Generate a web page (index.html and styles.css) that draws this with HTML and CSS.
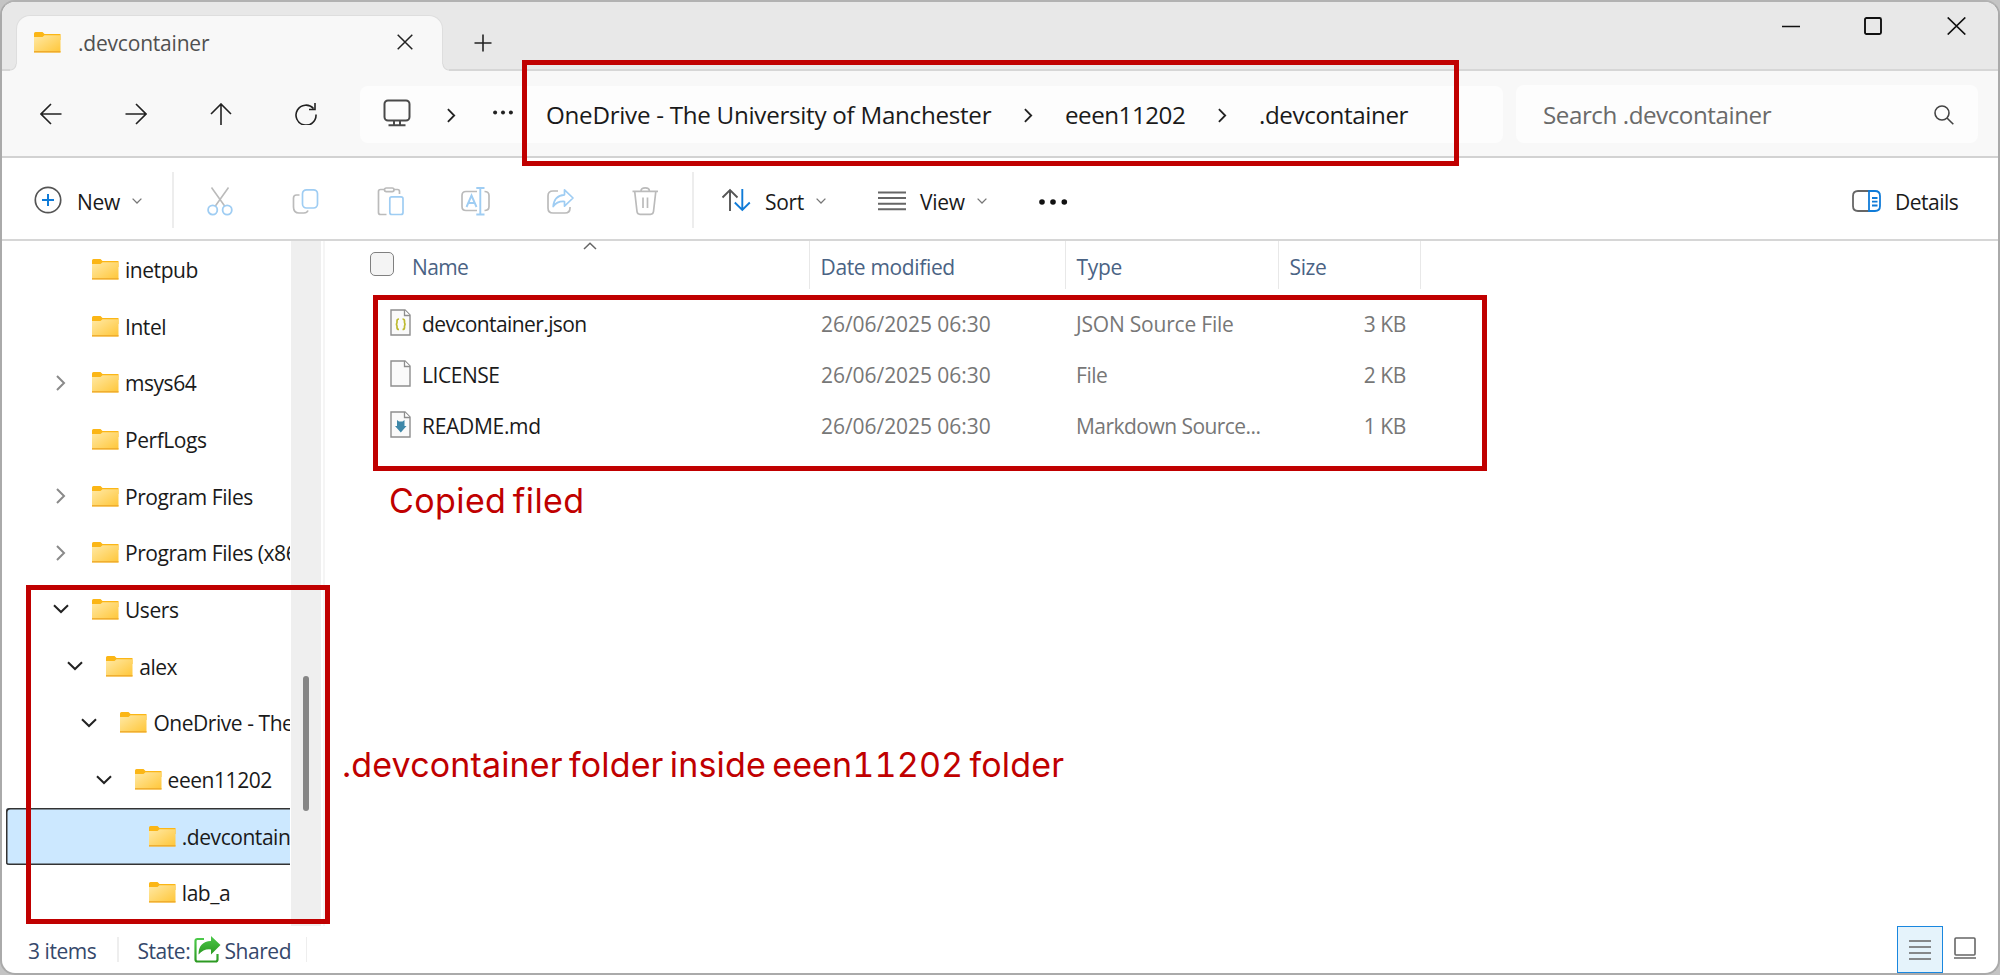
FILE: index.html
```html
<!DOCTYPE html>
<html lang="en">
<head>
<meta charset="utf-8">
<title>.devcontainer</title>
<link rel="stylesheet" href="styles.css">
</head>
<body>
<svg class="defs" width="0" height="0" aria-hidden="true">
  <defs>
    <linearGradient id="fold" x1="0" y1="0" x2="1" y2="1"><stop offset="0" stop-color="#ffe9a6"/><stop offset="1" stop-color="#ffc637"/></linearGradient>
    <linearGradient id="green" x1="0" y1="0" x2="0" y2="1"><stop offset="0" stop-color="#4cc94a"/><stop offset="1" stop-color="#2c9a22"/></linearGradient>
    <symbol id="folder" viewBox="0 0 27 21">
      <path d="M0 1.5Q0 0 1.5 0H8.5L10.5 2H26.5V8H0Z" fill="#fbb616"/>
      <path d="M0 5H8.5L10.5 3.2H26.5V20.5H0Z" fill="url(#fold)"/>
      <path d="M0 19.8H26.5" stroke="#efab2c" stroke-width="1.4"/>
    </symbol>
    <symbol id="right" viewBox="0 0 10 16"><path d="M1 1L8 8L1 15" fill="none" stroke="currentColor" stroke-width="2"/></symbol>
    <symbol id="down" viewBox="0 0 16 10"><path d="M1 1.2L8 8L15 1.2" fill="none" stroke="currentColor" stroke-width="2"/></symbol>
    <symbol id="page" viewBox="0 0 21 27"><path d="M1 1H15L20 6V26H1Z" fill="#fafafa" stroke="#8e8e8e" stroke-width="1.4"/><path d="M14.5 1V6.5H20" fill="#fff" stroke="#8e8e8e" stroke-width="1.3"/></symbol>
  </defs>
</svg>
<div class="window">
  <header class="titlebar">
    <div class="tab">
      <svg class="tab-folder" width="27" height="21"><use href="#folder"/></svg>
      <span class="tab-title">.devcontainer</span>
      <svg class="tab-close" width="16" height="16" viewBox="0 0 16 16"><path d="M.7.7L15.3 15.3M15.3.7L.7 15.3" stroke="#222" stroke-width="1.5"/></svg>
    </div>
    <svg class="newtab" width="18" height="18" viewBox="0 0 18 18"><path d="M9 .5V17.5M.5 9H17.5" stroke="#222" stroke-width="1.6"/></svg>
    <div class="controls">
      <svg width="18" height="18" viewBox="0 0 18 18"><path d="M0 9.5H18" stroke="#111" stroke-width="1.5"/></svg>
      <svg width="18" height="18" viewBox="0 0 18 18"><rect x="1" y="1" width="16" height="16" rx="1.5" fill="none" stroke="#111" stroke-width="1.9"/></svg>
      <svg width="19" height="18" viewBox="0 0 19 18"><path d="M.7.5L18.3 17.5M18.3.5L.7 17.5" stroke="#111" stroke-width="1.7"/></svg>
    </div>
  </header>
  <nav class="navbar">
    <div class="navbtns">
      <svg width="22" height="22" viewBox="0 0 22 22" fill="none" stroke="#222" stroke-width="1.6"><path d="M21.5 11H1M11 1L1 11L11 21"/></svg>
      <svg width="22" height="22" viewBox="0 0 22 22" fill="none" stroke="#222" stroke-width="1.6"><path d="M.5 11H21M11 1L21 11L11 21"/></svg>
      <svg width="22" height="22" viewBox="0 0 22 22" fill="none" stroke="#222" stroke-width="1.6"><path d="M11 22V1M1 11L11 1L21 11"/></svg>
      <svg width="22" height="22" viewBox="0 0 22 22" fill="none" stroke="#222" stroke-width="1.6"><path d="M21 11.5A10 10 0 1 1 18.5 5.500M20 0V6.500H14"/></svg>
    </div>
    <div class="address">
      <svg class="pc" width="28" height="28" viewBox="0 0 28 28" fill="none" stroke="#4a4a4a" stroke-width="2"><rect x="1.5" y="1.5" width="25" height="20" rx="3.5"/><path d="M11 21.5V26M17 21.5V26M5.5 26.2H22.5"/></svg>
      <svg class="crumb c1" width="9" height="15"><use href="#right"/></svg>
      <svg class="dots" width="20" height="5" viewBox="0 0 20 5" fill="#222"><circle cx="2.1" cy="2.5" r="2"/><circle cx="10" cy="2.5" r="2"/><circle cx="17.9" cy="2.5" r="2"/></svg>
      <span class="path p1">OneDrive - The University of Manchester</span>
      <svg class="crumb c2" width="9" height="15"><use href="#right"/></svg>
      <span class="path p2">eeen11202</span>
      <svg class="crumb c3" width="9" height="15"><use href="#right"/></svg>
      <span class="path p3">.devcontainer</span>
    </div>
    <div class="search">
      <span class="search-text">Search .devcontainer</span>
      <svg width="20" height="20" viewBox="0 0 20 20" fill="none" stroke="#444" stroke-width="1.6"><circle cx="8" cy="8" r="7"/><path d="M13 13L19.3 19.3"/></svg>
    </div>
  </nav>
  <div class="toolbar">
    <svg class="plus" width="28" height="28" viewBox="0 0 28 28" fill="none"><circle cx="14" cy="14" r="12.7" stroke="#555" stroke-width="1.7"/><path d="M14 8V20M8 14H20" stroke="#0f7bd8" stroke-width="2"/></svg>
    <span class="label l-new">New</span>
    <svg class="caret" width="10" height="6" viewBox="0 0 10 6"><path d="M.6.6L5 5L9.4.6" fill="none" stroke="currentColor" stroke-width="1.3"/></svg>
    <i class="sep s1"></i>
    <div class="actions">
      <svg width="30" height="30" viewBox="0 0 30 30" fill="none" stroke-width="1.6"><path d="M6.5 1.5L20 20.5M23.500 1.5L10 20.500" stroke="#bbb"/><g stroke="#9fcdf3" stroke-width="1.8"><circle cx="7.700" cy="24" r="4.6"/><circle cx="22.200" cy="24" r="4.600"/></g></svg>
      <svg width="30" height="30" viewBox="0 0 30 30" fill="none" stroke-width="1.7"><path d="M9.500 9H6.500Q3.500 9 3.500 12V21Q3.500 27 9 27H14Q17 27 18 24.500" stroke="#bbb"/><rect x="12.500" y="3.800" width="15" height="18.200" rx="4" stroke="#9fcdf3"/></svg>
      <svg width="30" height="30" viewBox="0 0 30 30" fill="none" stroke-width="1.7"><path d="M9.500 3.500H5.500Q3.500 3.500 3.500 5.500V26.500Q3.500 28.500 5.500 28.500H11.500M19 3.500H22.500Q24.500 3.500 24.500 5.500V8" stroke="#bbb"/><rect x="9.500" y="2" width="9.500" height="3.600" rx="1.800" stroke="#bbb"/><rect x="14.800" y="10.800" width="13.200" height="17.700" rx="2" stroke="#9fcdf3"/></svg>
      <svg width="30" height="30" viewBox="0 0 30 30" fill="none" stroke-width="1.700"><path d="M17 5.500H6Q2 5.500 2 9.500V20.500Q2 24.500 6 24.500H17M24.500 5.500Q29 5.500 29 9.500V20.500Q29 24.500 24.500 24.500" stroke="#bbb"/><path d="M6.500 21L11.500 9.500L16.500 21M8.200 17H14.800M20.300 2V28.500M16.300 2H24.500M16.300 28.500H24.500" stroke="#9fcdf3" stroke-width="1.900"/></svg>
      <svg width="30" height="30" viewBox="0 0 30 30" fill="none" stroke-width="1.700"><path d="M13 5H8Q3 5 3 10V22Q3 27 8 27H20Q25 27 25 22V21" stroke="#bbb"/><path d="M19.500 3.800L28 12L19.500 20.200V15.500Q12 15 8.200 20.500Q9 9.500 19.500 8.800Z" stroke="#9fcdf3" stroke-linejoin="round"/></svg>
      <svg width="30" height="30" viewBox="0 0 30 30" fill="none" stroke="#bbb" stroke-width="1.700"><path d="M2.500 5.300H28M11 5Q11 1.800 15.200 1.800T19.400 5M4.700 5.500L7 25.500Q7.300 28.300 10 28.300H20.500Q23.200 28.300 23.500 25.500L25.800 5.500M13 11.500V22M17.500 11.500V22"/></svg>
    </div>
    <i class="sep s2"></i>
    <svg class="sort" width="30" height="24" viewBox="0 0 30 24" fill="none" stroke-width="1.900"><path d="M9 23V2M1.500 9.500L9 2L16.500 9.500" stroke="#555"/><path d="M21.300 1V22M13.800 14.500L21.300 22L28.800 14.500" stroke="#0f7bd8"/></svg>
    <span class="label l-sort">Sort</span>
    <svg class="caret" width="10" height="6" viewBox="0 0 10 6"><path d="M.6.6L5 5L9.4.6" fill="none" stroke="currentColor" stroke-width="1.3"/></svg>
    <svg class="view" width="28" height="20" viewBox="0 0 28 20" stroke="#666" stroke-width="1.900"><path d="M0 1.500H28M0 7H28M0 12.700H28M0 18.200H28"/></svg>
    <span class="label l-view">View</span>
    <svg class="caret" width="10" height="6" viewBox="0 0 10 6"><path d="M.6.6L5 5L9.4.6" fill="none" stroke="currentColor" stroke-width="1.3"/></svg>
    <svg class="more" width="30" height="8" viewBox="0 0 30 8" fill="#111"><circle cx="4" cy="4" r="2.800"/><circle cx="15" cy="4" r="2.800"/><circle cx="26.300" cy="4" r="2.800"/></svg>
    <svg class="details-ico" width="29" height="22" viewBox="0 0 29 22" fill="none" stroke-width="1.800"><path d="M17 1H6Q1 1 1 6V16Q1 21 6 21H17" stroke="#666"/><path d="M17 1H23Q28 1 28 6V16Q28 21 23 21H17ZM20 8H25.500M20 11.700H25.500M20 15.500H25.500" stroke="#0f7bd8"/></svg>
    <span class="label l-details">Details</span>
  </div>
  <main class="body">
    <aside class="tree">
      <div class="node"><i class="tw"></i><svg width="27" height="21"><use href="#folder"/></svg><span>inetpub</span></div>
      <div class="node"><i class="tw"></i><svg width="27" height="21"><use href="#folder"/></svg><span>Intel</span></div>
      <div class="node"><i class="tw shut"><svg width="10" height="16"><use href="#right"/></svg></i><svg width="27" height="21"><use href="#folder"/></svg><span>msys64</span></div>
      <div class="node"><i class="tw"></i><svg width="27" height="21"><use href="#folder"/></svg><span>PerfLogs</span></div>
      <div class="node"><i class="tw shut"><svg width="10" height="16"><use href="#right"/></svg></i><svg width="27" height="21"><use href="#folder"/></svg><span>Program Files</span></div>
      <div class="node"><i class="tw shut"><svg width="10" height="16"><use href="#right"/></svg></i><svg width="27" height="21"><use href="#folder"/></svg><span>Program Files (x86)</span></div>
      <div class="node"><i class="tw"><svg width="16" height="10"><use href="#down"/></svg></i><svg width="27" height="21"><use href="#folder"/></svg><span>Users</span></div>
      <div class="node d1"><i class="tw"><svg width="16" height="10"><use href="#down"/></svg></i><svg width="27" height="21"><use href="#folder"/></svg><span>alex</span></div>
      <div class="node d2"><i class="tw"><svg width="16" height="10"><use href="#down"/></svg></i><svg width="27" height="21"><use href="#folder"/></svg><span>OneDrive - The</span></div>
      <div class="node d3"><i class="tw"><svg width="16" height="10"><use href="#down"/></svg></i><svg width="27" height="21"><use href="#folder"/></svg><span>eeen11202</span></div>
      <div class="node d4 selected"><i class="tw"></i><svg width="27" height="21"><use href="#folder"/></svg><span>.devcontainer</span></div>
      <div class="node d4"><i class="tw"></i><svg width="27" height="21"><use href="#folder"/></svg><span>lab_a</span></div>
    </aside>
    <div class="scrollbar"><div class="thumb"></div></div>
    <section class="files">
      <div class="head">
        <div class="cell name"><i class="check"></i><span>Name</span><svg class="sortmark" width="14" height="8" viewBox="0 0 14 8"><path d="M1 7L7 1.200L13 7" fill="none" stroke="#666" stroke-width="1.500"/></svg></div>
        <div class="cell">Date modified</div>
        <div class="cell">Type</div>
        <div class="cell">Size</div>
      </div>
      <div class="row">
        <div class="fname"><svg width="21" height="27" viewBox="0 0 21 27"><use href="#page"/><path d="M9 10Q7 10 7 12V13.500Q7 15.300 5.700 15.300Q7 15.300 7 17V18.500Q7 20.500 9 20.500M12.500 10Q14.500 10 14.500 12V13.500Q14.500 15.300 15.800 15.300Q14.500 15.300 14.500 17V18.500Q14.500 20.500 12.500 20.500" fill="none" stroke="#bcb92f" stroke-width="1.700"/></svg><span class="n1">devcontainer.json</span></div>
        <span class="date">26/06/2025 06:30</span><span class="type t1">JSON Source File</span><span class="size">3 KB</span>
      </div>
      <div class="row">
        <div class="fname"><svg width="21" height="27"><use href="#page"/></svg><span class="n2">LICENSE</span></div>
        <span class="date">26/06/2025 06:30</span><span class="type t2">File</span><span class="size">2 KB</span>
      </div>
      <div class="row">
        <div class="fname"><svg width="21" height="27" viewBox="0 0 21 27"><use href="#page"/><path d="M7 9L9 10.500H12.500L14.500 9V15H16.500L10.800 21.500L5 15H7Z" fill="#3d87a8"/></svg><span class="n3">README.md</span></div>
        <span class="date">26/06/2025 06:30</span><span class="type t3">Markdown Source...</span><span class="size">1 KB</span>
      </div>
    </section>
  </main>
  <footer class="status">
    <span class="items">3 items</span><i class="ssep"></i>
    <span class="state">State:</span>
    <svg class="share" width="27" height="27" viewBox="0 0 27 27" fill="none"><path d="M10 3H3.500Q1.500 3 1.500 5V23.500Q1.500 25.500 3.500 25.500H21.500Q23.500 25.500 23.500 23.500V18" stroke="url(#green)" stroke-width="2.200"/><path d="M17 0L26.500 9L17 18.500V13.500Q10 12.500 4.500 18.500Q4.500 5.500 17 5Z" fill="url(#green)"/></svg>
    <span class="shared">Shared</span><i class="ssep"></i>
    <div class="viewmodes">
      <div class="mode on"><svg width="22" height="22" viewBox="0 0 22 22" stroke="#666" stroke-width="1.700"><path d="M0 2H22M0 8H22M0 14H22M0 20H22"/></svg></div>
      <svg class="thumbs" width="22" height="22" viewBox="0 0 22 22" fill="none" stroke="#666" stroke-width="1.600"><rect x="1" y="1" width="20" height="17" rx="1"/><path d="M0 21H22"/></svg>
    </div>
  </footer>
</div>
<div class="mark m-path"></div>
<div class="mark m-files"></div>
<div class="mark m-tree"></div>
<div class="note n-files">Copied filed</div>
<div class="note n-tree">.devcontainer folder inside eeen11202 folder</div>
</body>
</html>
```

FILE: styles.css
```css
* { box-sizing: border-box; }
body { margin: 0; width: 2000px; height: 975px; overflow: hidden; background: #c4c4c4; font-family: "Open Sans", "Noto Sans", sans-serif; font-size: 21px; letter-spacing: -.45px; color: #1a1a1a; position: relative; }
svg { display: block; flex: none; }
i { display: block; flex: none; font-style: normal; }
span { white-space: pre; }
.defs { position: absolute; }
.window { width: 2000px; height: 975px; border: 2px solid #aaa; border-top-color: #b2b2b2; border-radius: 15px; overflow: hidden; background: #fff; display: flex; flex-direction: column; }
.titlebar { height: 69px; flex: none; background: #e8e8e8; border-bottom: 2px solid #d6d6d6; display: flex; align-items: flex-start; }
.tab { position: relative; margin: 13px 0 -2px 14px; width: 427px; height: 56px; background: #f8f8f8; border: 1px solid #dedede; border-bottom: 0; border-radius: 14px 14px 0 0; display: flex; align-items: center; padding: 0 29px 3px 17px; }
.tab::before, .tab::after { content: ""; position: absolute; bottom: 0; width: 7px; height: 7px; }
.tab::before { right: 100%; background: radial-gradient(circle at 0 0, #e8e8e8 5px, #d8d8d8 6px, #f8f8f8 7px); }
.tab::after { left: 100%; background: radial-gradient(circle at 100% 0, #e8e8e8 5px, #d8d8d8 6px, #f8f8f8 7px); }
.tab-title { margin: 1px 0 0 17px; font-weight: 500; color: #505050; letter-spacing: -.2px; }
.tab-close { margin-left: auto; }
.newtab { margin: 32px 0 0 31px; }
.controls { margin: 15px 32px 0 auto; display: flex; gap: 64px; }
.controls svg:nth-child(-n+2) { margin-left: -1px; margin-right: 1px; }
.navbar { height: 87px; flex: none; background: #f8f8f8; border-bottom: 2px solid #d2d2d2; display: flex; align-items: flex-start; }
.navbtns { display: flex; gap: 63px; padding: 32px 0 0 38px; width: 358px; }
.address { width: 1143px; height: 57px; margin-top: 15px; background: #fdfdfd; border-radius: 8px; display: flex; align-items: center; }
.pc { margin: 0 0 3px 23px; }
.crumb { color: #222; margin-top: 2px; }
.c1 { margin-left: 36px; } .dots { margin: 0 0 4px 37px; }
.path { font-size: 24.200px; margin-bottom: 1px; }
.p1 { margin-left: 33px; width: 446px; letter-spacing: -.28px; }
.c2 { margin-left: 32px; } .p2 { margin-left: 32px; width: 121px; letter-spacing: -.5px; }
.c3 { margin-left: 32px; } .p3 { margin-left: 32px; letter-spacing: -.4px; }
.search { width: 462px; height: 58px; margin: 14px 0 0 13px; background: #fdfdfd; border-radius: 8px; display: flex; align-items: center; justify-content: space-between; padding: 2px 24px 0 27px; }
.search-text { font-size: 24.200px; color: #6a6a6a; margin-bottom: 2px; }
.toolbar { height: 83px; flex: none; border-bottom: 2px solid #d6d6d6; display: flex; align-items: center; padding-top: 3px; }
.plus { margin: 0 0 1px 32px; }
.label { margin-top: 3px; letter-spacing: -.3px; }
.l-new { margin-left: 15px; width: 55px; }
.caret { color: #777; margin-top: 1px; }
.sep { width: 2px; height: 56px; background: #ededed; margin-bottom: 1px; }
.s1 { margin-left: 30px; }
.actions { display: flex; gap: 55px; margin: 1px 0 0 31px; }
.s2 { margin-left: 32px; }
.sort { margin: 0 0 0 27px; } .l-sort { margin-left: 14px; width: 51px; }
.view { margin: 1px 0 0 52px; } .l-view { margin-left: 14px; width: 57px; }
.more { margin: 3px 0 0 51px; }
.details-ico { margin: 1px 0 0 auto; } .l-details { margin-left: 14px; margin-right: 39px; width: 64px; letter-spacing: -.5px; }
.body { height: 685px; flex: none; display: flex; }
.tree { width: 288px; height: 684px; overflow: hidden; }
.node { height: 56.700px; margin-left: 4px; padding-left: 39px; display: flex; align-items: center; }
.node span { margin: 1px 0 0 6px; }
.tw { width: 32px; height: 16px; margin-right: 15px; display: flex; justify-content: center; align-items: center; color: #222; }
.shut { color: #8a8a8a; }
.d1 { padding-left: 53.200px; } .d2 { padding-left: 67.400px; } .d3 { padding-left: 81.600px; } .d4 { padding-left: 95.800px; }
.selected { background: #cce8ff; box-shadow: inset 1.500px 1.500px #333, inset 0 -1.500px #333; border-radius: 3px 0 0 3px; }
.scrollbar { width: 30px; margin-left: 1px; background: #efefef; }
.thumb { width: 6px; height: 135px; margin: 435px auto 0 12px; border-radius: 3px; background: #868686; }
.files { flex: 1; margin-left: 2px; border-left: 2px solid #f5f5f5; }
.head { height: 48px; display: grid; grid-template-columns: 485px 256px 213px 142px; color: #4a6384; }
.cell { border-right: 1.500px solid #e8e8e8; padding: 11px 0 0 10.500px; line-height: 30px; letter-spacing: -.35px; }
.name { display: flex; padding-left: 45px; letter-spacing: -.6px; }
.check { width: 24px; height: 24px; border: 1.500px solid #808080; border-radius: 5px; background: #f4f4f4; }
.name span { margin-left: 18px; }
.sortmark { margin: -10px 0 0 115px; }
.row { height: 51px; display: grid; grid-template-columns: 496px 255px 229px 101px; align-items: center; color: #777; }
.head + .row { margin-top: 9px; }
.date { letter-spacing: -.05px; }
.t1 { letter-spacing: -.2px; } .t3 { letter-spacing: -.54px; }
.n1 { letter-spacing: -.6px; } .n3 { letter-spacing: -.3px; }
.fname { display: flex; align-items: center; padding-left: 65px; color: #1a1a1a; }
.fname svg { margin-bottom: 2px; }
.fname span { margin-left: 11px; }
.size { text-align: right; letter-spacing: -.4px; }
.status { flex: 1; display: flex; align-items: center; color: #35486b; }
.status span { margin-top: 2px; }
.items { margin-left: 26px; width: 89px; }
.ssep { width: 1.500px; height: 25px; background: #eee; }
.state { margin-left: 19px; width: 56px; }
.shared { margin-left: 4px; width: 81px; }
.viewmodes { margin: 0 22px 0 auto; display: flex; align-items: center; gap: 11px; }
.thumbs { margin-bottom: 3px; }
.mode { width: 46px; height: 47px; border: 1.500px solid #1987df; background: #e5f3fb; display: flex; align-items: center; justify-content: center; }
.mark { position: absolute; border: 5px solid #c00000; }
.m-path { left: 522px; top: 60px; width: 937px; height: 106px; }
.m-files { left: 373px; top: 295px; width: 1114px; height: 176px; }
.m-tree { left: 26px; top: 585px; width: 304px; height: 339px; }
.note { position: absolute; color: #c00000; font-family: Inter, "Noto Sans", sans-serif; font-size: 34px; line-height: 40px; white-space: pre; word-spacing: -3px; font-variant-numeric: tabular-nums; }
.n-files { left: 389px; top: 481px; letter-spacing: .4px; }
.n-tree { left: 342px; top: 745px; letter-spacing: .15px; }
```
